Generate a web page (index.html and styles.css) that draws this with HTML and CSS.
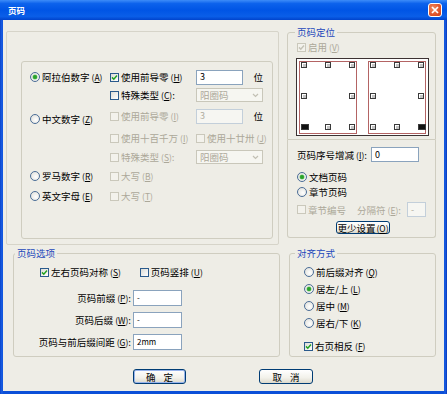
FILE: index.html
```html
<!DOCTYPE html>
<html>
<head>
<meta charset="utf-8">
<link rel="stylesheet" href="styles.css">
</head>
<body>
<div class="win">
  <div class="titlebar">
    <span class="title">页码</span>
    <span class="close"><svg width="8" height="8" viewBox="0 0 8 8"><path d="M1 1L7 7M7 1L1 7" stroke="#fff" stroke-width="1.7"/></svg></span>
  </div>
  <div class="client">
    <div class="toprow">
      <div class="outerbox">
        <div class="numgroup">
          <div class="numgrid">
            <label class="opt c1"><span class="rd on"></span>阿拉伯数字<span class="k">(<u>A</u>)</span></label>
            <label class="opt c2"><span class="cb on"><svg width="7" height="7" viewBox="0 0 7 7"><path d="M1 3.4L2.8 5.2L6 1.6" fill="none" stroke="#21a121" stroke-width="1.5"/></svg></span>使用前导零<span class="k">(<u>H</u>)</span></label>
            <span class="inp num">3</span>
            <span class="unit">位</span>

            <label class="opt c2"><span class="cb"></span>特殊类型<span class="k">(<u>C</u>)</span>:</label>
            <span class="sel span2 dis">阳圈码<svg width="7" height="5" viewBox="0 0 7 5"><path d="M1 1L3.5 3.5L6 1" fill="none" stroke="#c2c0b4" stroke-width="1.2"/></svg></span>

            <label class="opt c1 low"><span class="rd"></span>中文数字<span class="k">(<u>Z</u>)</span></label>
            <label class="opt dis c2"><span class="cb dis"></span>使用前导零<span class="k">(<u>I</u>)</span></label>
            <span class="inp num dis">3</span>
            <span class="unit">位</span>

            <label class="opt dis c2"><span class="cb dis"></span>使用十百千万<span class="k">(<u>I</u>)</span></label>
            <label class="opt dis span2"><span class="cb dis"></span>使用十廿卅<span class="k">(<u>J</u>)</span></label>

            <label class="opt dis c2"><span class="cb dis"></span>特殊类型<span class="k">(<u>S</u>)</span>:</label>
            <span class="sel span2 dis">阳圈码<svg width="7" height="5" viewBox="0 0 7 5"><path d="M1 1L3.5 3.5L6 1" fill="none" stroke="#c2c0b4" stroke-width="1.2"/></svg></span>

            <label class="opt c1"><span class="rd"></span>罗马数字<span class="k">(<u>R</u>)</span></label>
            <label class="opt dis c2"><span class="cb dis"></span>大写<span class="k">(<u>B</u>)</span></label>

            <label class="opt c1"><span class="rd"></span>英文字母<span class="k">(<u>E</u>)</span></label>
            <label class="opt dis c2"><span class="cb dis"></span>大写<span class="k">(<u>T</u>)</span></label>
          </div>
        </div>
      </div>

      <div class="rightcol">
        <div class="group posgroup">
          <div class="legend">页码定位</div>
          <label class="opt dis enable"><span class="cb dis"><svg width="7" height="7" viewBox="0 0 7 7"><path d="M1 3.4L2.8 5.2L6 1.6" fill="none" stroke="#c4c2b6" stroke-width="1.5"/></svg></span>启用<span class="k">(<u>V</u>)</span></label>
          <div class="diagram">
            <div class="page">
              <span class="h"></span><span class="h mid"></span><span class="h right"></span>
              <span class="h"></span><span></span><span class="h right"></span>
              <span class="h sel"></span><span class="h mid"></span><span class="h right"></span>
            </div>
            <div class="page">
              <span class="h"></span><span class="h mid"></span><span class="h right"></span>
              <span class="h"></span><span></span><span class="h right"></span>
              <span class="h"></span><span class="h mid"></span><span class="h right sel"></span>
            </div>
          </div>
        </div>
        <div class="restbox">
          <div class="incr"><span class="incrlbl">页码序号增减<span class="k">(<u>I</u>)</span>:</span><span class="inp w48">0</span></div>
          <label class="opt r-doc"><span class="rd on"></span>文档页码</label>
          <label class="opt r-sec"><span class="rd"></span>章节页码</label>
          <div class="seprow">
            <label class="opt dis seccb"><span class="cb dis"></span>章节编号</label>
            <span class="dis seplbl">分隔符<span class="k">(<u>E</u>)</span>:</span>
            <span class="inp sepbox dis">-</span>
          </div>
          <div class="lesswrap"><span class="btn less">更少设置<span class="k">(<u>O</u>)</span></span></div>
        </div>
      </div>
    </div>

    <div class="botrow">
      <div class="group optgroup">
        <div class="legend">页码选项</div>
        <div class="cbrow">
          <label class="opt"><span class="cb on"><svg width="7" height="7" viewBox="0 0 7 7"><path d="M1 3.4L2.8 5.2L6 1.6" fill="none" stroke="#21a121" stroke-width="1.5"/></svg></span>左右页码对称<span class="k">(<u>S</u>)</span></label>
          <label class="opt"><span class="cb"></span>页码竖排<span class="k">(<u>U</u>)</span></label>
        </div>
        <div class="form">
          <span class="lbl">页码前缀<span class="k">(<u>P</u>)</span>:</span><span class="inp small">-</span>
          <span class="lbl">页码后缀<span class="k">(<u>W</u>)</span>:</span><span class="inp small">-</span>
          <span class="lbl">页码与前后缀间距<span class="k">(<u>G</u>)</span>:</span><span class="inp small">2mm</span>
        </div>
      </div>
      <div class="group aligngroup">
        <div class="legend">对齐方式</div>
        <label class="opt a1"><span class="rd"></span>前后缀对齐<span class="k">(<u>Q</u>)</span></label>
        <label class="opt a2"><span class="rd on"></span>居左/上<span class="k">(<u>L</u>)</span></label>
        <label class="opt a2"><span class="rd"></span>居中<span class="k">(<u>M</u>)</span></label>
        <label class="opt a2"><span class="rd"></span>居右/下<span class="k">(<u>K</u>)</span></label>
        <label class="opt a5"><span class="cb on"><svg width="7" height="7" viewBox="0 0 7 7"><path d="M1 3.4L2.8 5.2L6 1.6" fill="none" stroke="#21a121" stroke-width="1.5"/></svg></span>右页相反<span class="k">(<u>F</u>)</span></label>
      </div>
    </div>

    <div class="btnrow">
      <span class="btn ok def">确<span class="gap"></span>定</span>
      <span class="btn cancel">取<span class="gap"></span>消</span>
    </div>
  </div>
</div>
</body>
</html>
```

FILE: styles.css
```css
* { box-sizing: border-box; margin: 0; padding: 0; }
body {
  margin: 0;
  width: 447px;
  height: 394px;
  overflow: hidden;
  font-family: "Noto Sans CJK SC", "Noto Sans", sans-serif;
  font-size: 9.5px;
  line-height: 12px;
  color: #000;
  background: #fff;
}
.win {
  width: 447px;
  height: 394px;
  background: linear-gradient(to right, #0b44c9, #1a5fe6 2px, #0b4fd8 3px, #0b4fd8 444px, #1a5fe6 445px, #0838b8);
  display: flex;
  flex-direction: column;
}
.titlebar {
  height: 20px;
  flex: none;
  display: flex;
  align-items: center;
  justify-content: space-between;
  background: linear-gradient(to bottom, #3d8cf8 0%, #0c62ec 18%, #0055e5 50%, #0a5ee8 82%, #0043cc 100%);
  padding: 0 5px 0 8px;
}
.title {
  color: #fff;
  font-weight: bold;
  font-size: 8.5px;
}
.close {
  width: 14px;
  height: 14px;
  border: 1px solid #fff;
  border-radius: 3px;
  background: radial-gradient(circle at 35% 35%, #f08a60, #e0542a 60%, #c83c18);
  display: flex;
  align-items: center;
  justify-content: center;
}
.client {
  flex: 1;
  margin: 0 3px 3px 3px;
  background: #eeede6;
  display: flex;
  flex-direction: column;
}

/* top row */
.toprow {
  margin-top: 11px;
  display: flex;
  align-items: flex-start;
}
.outerbox {
  margin-left: 3px;
  width: 273px;
  height: 214px;
  border: 1px solid #d6d4c9;
  border-radius: 2px;
}
.numgroup {
  margin-top: 29px;
  margin-left: 14px;
  width: 252px;
  height: 178px;
  border: 1px solid #cfcdc0;
  border-radius: 3px;
}
.numgrid {
  margin-top: 6px;
  margin-left: 8px;
  display: grid;
  grid-template-columns: 80px 86px 47px 20px;
  grid-template-rows: 18px 18px 24px 20px 18px 20px 20px;
  align-items: center;
}
.c1 { grid-column: 1; }
.c2 { grid-column: 2; }
.span2 { grid-column: span 2; }
.low { align-self: end; margin-bottom: 3px; }
.unit { justify-self: end; }

.opt {
  display: inline-flex;
  align-items: center;
  white-space: nowrap;
  height: 12px;
}
.opt .cb, .opt .rd { margin-right: 2px; }
.k { font-size: 8.5px; margin-left: 2px; }
.k u { text-decoration: underline; }
.dis { color: #aca899; }

.cb {
  width: 9px;
  height: 9px;
  flex: none;
  border: 1px solid #2a5a8c;
  background: linear-gradient(135deg, #dcdcd6, #fff);
  display: inline-flex;
  align-items: center;
  justify-content: center;
}
.cb.dis {
  border-color: #cac8bb;
  background: #f3f2ec;
}
.rd {
  width: 10px;
  height: 10px;
  flex: none;
  border: 1px solid #4b6d97;
  border-radius: 50%;
  background: radial-gradient(circle at 60% 60%, #fff, #dcdcd6);
  display: inline-flex;
  align-items: center;
  justify-content: center;
}
.rd.on::after {
  content: "";
  width: 4px;
  height: 4px;
  border-radius: 50%;
  background: #2aa22a;
  box-shadow: 0 0 0 0.5px #7ccc7c;
}

.inp {
  height: 15px;
  border: 1px solid #8aa3bd;
  background: #fff;
  display: flex;
  align-items: center;
  padding-left: 3px;
  font-size: 9px;
}
.inp.dis {
  border-color: #c3cfda;
  background: #f6f6f2;
  color: #b0ad9f;
}
.sel {
  height: 14px;
  border: 1px solid #c9c7ba;
  background: #f6f6f1;
  display: flex;
  align-items: center;
  justify-content: space-between;
  padding: 0 3px 0 3px;
}

/* right column */
.rightcol {
  margin-left: 8px;
  margin-top: 1px;
  width: 149px;
  display: flex;
  flex-direction: column;
}
.group {
  border: 1px solid #cfcdc0;
  border-radius: 3px;
}
.legend {
  display: block;
  width: fit-content;
  margin-top: -7px;
  height: 12px;
  padding: 0 2px;
  background: #eeede6;
  color: #1d48bb;
}
.posgroup {
  height: 108px;
  padding-left: 9px;
  border-bottom-left-radius: 0;
  border-bottom-right-radius: 0;
}
.posgroup .legend { margin-left: -2px; }
.enable { margin-top: 3px; }
.diagram {
  margin-top: 5px;
  margin-left: -1px;
  width: 133px;
  height: 78px;
  border: 1px solid #3c3232;
  background: #fff;
  display: flex;
  justify-content: space-between;
  padding: 2px 2px 1px 2px;
}
.page {
  width: 58px;
  height: 73px;
  border: 1px solid #b46464;
  background: #fff;
  display: grid;
  grid-template-columns: 6px 1fr 6px;
  grid-template-rows: 6px 1fr 6px;
  align-items: center;
  padding: 0 1px 3px 1px;
}
.h {
  width: 6px;
  height: 6px;
  border: 1px solid #3a3a3a;
  background: #c4c4c4;
  box-shadow: inset 1px 1px #fff;
}
.h.mid { justify-self: center; }
.h.sel { background: #111; box-shadow: none; }

.restbox {
  height: 98px;
  border: 1px solid #cfcdc0;
  border-top: none;
  border-radius: 0 0 3px 3px;
  padding-left: 9px;
  display: flex;
  flex-direction: column;
  align-items: flex-start;
}
.incr {
  margin-top: 7px;
  display: flex;
  align-items: center;
  height: 15px;
}
.incrlbl { width: 74px; white-space: nowrap; }
.w48 { width: 48px; }
.r-doc { margin-top: 9px; }
.r-sec { margin-top: 3px; }
.seprow {
  margin-top: 4px;
  height: 15px;
  display: flex;
  align-items: center;
}
.seccb { width: 60px; }
.seplbl { width: 50px; white-space: nowrap; }
.sepbox { width: 19px; }
.lesswrap { margin-top: 4px; margin-left: 39px; }

.btn {
  display: flex;
  align-items: center;
  justify-content: center;
  border: 1px solid #003c74;
  border-radius: 3px;
  background: linear-gradient(to bottom, #fff, #f2f1ea 60%, #dcd9cc);
  white-space: nowrap;
}
.less {
  width: 54px;
  height: 13px;
}
.less .k { margin-left: 1px; }

/* bottom row */
.botrow {
  margin-top: 8px;
  display: flex;
}
.optgroup {
  margin-left: 10px;
  width: 267px;
  height: 104px;
}
.optgroup .legend { margin-left: 1px; }
.cbrow {
  margin-top: 7px;
  margin-left: 26px;
  display: flex;
  gap: 19px;
}
.form {
  margin-top: 12px;
  display: grid;
  grid-template-columns: 117px 49px;
  grid-template-rows: 16px 16px 16px;
  column-gap: 2px;
  row-gap: 6px;
  align-items: center;
}
.lbl { justify-self: end; white-space: nowrap; }
.inp.small { height: 16px; font-size: 8px; align-items: flex-start; padding-top: 1px; }

.aligngroup {
  margin-left: 9px;
  width: 147px;
  height: 104px;
  padding-left: 14px;
  display: flex;
  flex-direction: column;
  align-items: flex-start;
}
.aligngroup .legend { margin-left: -9px; }
.a1 { margin-top: 7px; }
.a2 { margin-top: 5px; }
.a5 { margin-top: 11px; }

.btnrow {
  margin-top: 12px;
  display: flex;
  padding-left: 130px;
  gap: 73px;
}
.ok { width: 53px; height: 15px; }
.cancel { width: 54px; height: 15px; }
.def { box-shadow: inset 0 0 0 1px #98b4ec; }
.gap { display: inline-block; width: 8px; }
```
